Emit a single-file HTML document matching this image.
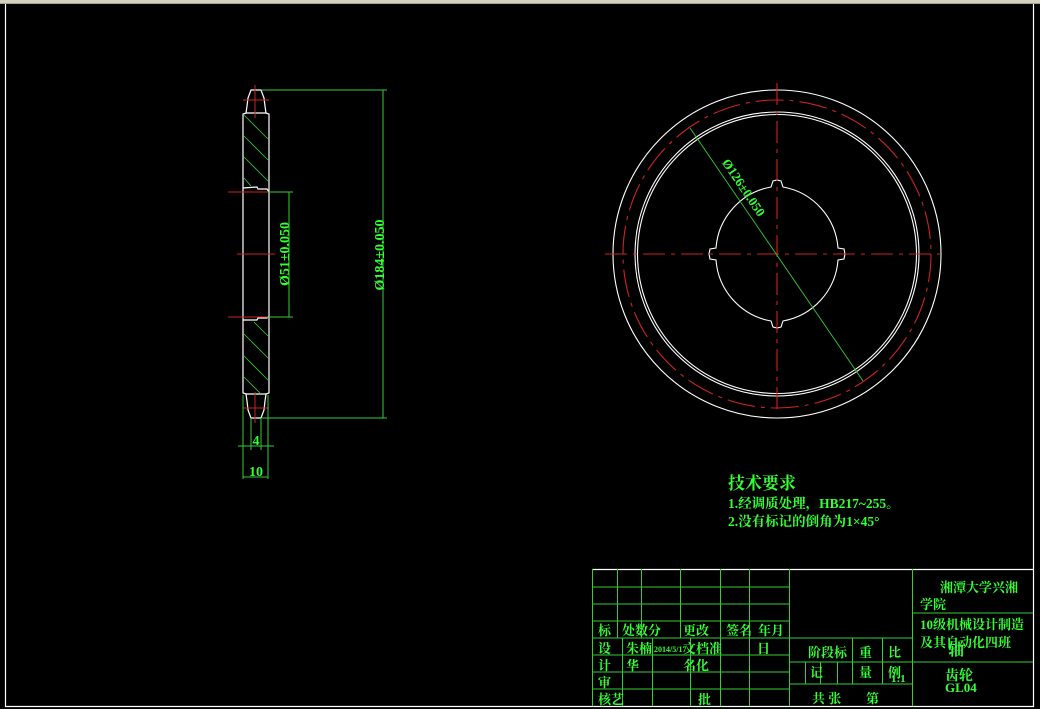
<!DOCTYPE html>
<html><head><meta charset="utf-8"><style>
html,body{margin:0;padding:0;background:#000;width:1040px;height:709px;overflow:hidden}
svg{display:block}
text{font-family:"Liberation Serif","Noto Serif CJK SC","WenQuanYi Zen Hei",serif;fill:#3f3;font-weight:bold}
</style></head><body>
<svg width="1040" height="709" viewBox="0 0 1040 709" xmlns="http://www.w3.org/2000/svg">
<rect x="0" y="0" width="1040" height="4" fill="#d4d0c0"/>
<line x1="0" y1="3.5" x2="1040" y2="3.5" stroke="#a8a490"/>
<g stroke="#fff" stroke-width="1.2" fill="none">
<line x1="5.5" y1="4" x2="5.5" y2="706.5"/>
<line x1="5" y1="706.5" x2="1034" y2="706.5"/>
<line x1="1033.5" y1="4" x2="1033.5" y2="707"/>
<line x1="592" y1="569.5" x2="1034" y2="569.5"/>
</g>
<g stroke="#fff" stroke-width="1.2" fill="none">
<path d="M251,90 L261,90 L264,98 L265,106 L266,113 L269,114 L269,393 L266,394 L265,401 L264,410 L261,418 L251,418 L248,410 L247,401 L246,394 L243,393 L243,114 L246,113 L247,106 L248,98 Z"/>
<line x1="246" y1="113" x2="266" y2="113"/>
<line x1="246" y1="394" x2="266" y2="394"/>
<path d="M243,188 L257,187 L258,189 L267,189 L269,192"/>
<path d="M243,320 L257,320 L258,318 L267,318 L269,316"/>
</g>
<g stroke="#3c3" stroke-width="0.8">
<line x1="244" y1="115" x2="268" y2="139"/><line x1="244" y1="136" x2="268" y2="160"/>
<line x1="244" y1="157" x2="268" y2="181"/><line x1="244" y1="178" x2="251" y2="186"/>
<line x1="254" y1="322" x2="268" y2="336"/><line x1="244" y1="334" x2="268" y2="358"/>
<line x1="244" y1="356" x2="268" y2="380"/><line x1="244" y1="377" x2="260" y2="393"/>
</g>
<g stroke="#c22" stroke-width="1">
<line x1="243" y1="100" x2="269" y2="100"/><line x1="255" y1="85" x2="255" y2="118"/>
<line x1="228" y1="192" x2="268" y2="192"/><line x1="237" y1="254" x2="275" y2="254"/>
<line x1="228" y1="317" x2="268" y2="317"/>
<line x1="243" y1="408" x2="269" y2="408"/><line x1="255" y1="392" x2="255" y2="423"/>
</g>
<g stroke="#3c3" stroke-width="1">
<line x1="262" y1="90" x2="387" y2="90"/><line x1="262" y1="418" x2="387" y2="418"/>
<line x1="383" y1="90" x2="383" y2="418"/>
<line x1="268" y1="192" x2="293" y2="192"/><line x1="268" y1="317" x2="293" y2="317"/>
<line x1="289" y1="192" x2="289" y2="317"/>
<line x1="243" y1="395" x2="243" y2="479"/><line x1="268" y1="395" x2="268" y2="479"/>
<line x1="251" y1="418" x2="251" y2="450"/><line x1="261" y1="418" x2="261" y2="450"/>
<line x1="238" y1="446" x2="274" y2="446"/>
<line x1="243" y1="477" x2="268" y2="477"/>
</g>
<text transform="translate(384,255) rotate(-90)" text-anchor="middle" font-size="14">Ø184±0.050</text>
<text transform="translate(289,254) rotate(-90)" text-anchor="middle" font-size="14">Ø51±0.050</text>
<text x="256" y="445" text-anchor="middle" font-size="14">4</text>
<text x="256" y="476" text-anchor="middle" font-size="14">10</text>
<g fill="none" stroke-width="1.1">
<circle cx="777" cy="254" r="164" stroke="#fff"/>
<circle cx="777" cy="254" r="154" stroke="#c22" stroke-dasharray="28,6,4,6"/>
<circle cx="777" cy="254" r="142" stroke="#fff"/>
<circle cx="777" cy="254" r="139.5" stroke="#fff"/>
<path stroke="#fff" d="M771,187 A67,67 0 0 0 716,248 L710,249 L709,254 L710,259 L716,260 A67,67 0 0 0 771,321 L773,327 L777,328 L781,327 L783,321 A67,67 0 0 0 838,260 L844,259 L845,254 L844,249 L838,248 A67,67 0 0 0 783,187 L781,181 L777,180 L773,181 Z"/>
<line x1="605" y1="254" x2="940" y2="254" stroke="#c22" stroke-dasharray="22,6,4,6"/>
<line x1="777" y1="83" x2="777" y2="415" stroke="#c22" stroke-dasharray="22,6,4,6"/>
<line x1="690" y1="128" x2="863" y2="381" stroke="#3c3" stroke-width="0.9"/>
</g>
<text transform="translate(740,190) rotate(56)" font-size="13" text-anchor="middle">Ø126±0.050</text>
<text x="728" y="489" font-size="17">技术要求</text>
<text x="728" y="508" font-size="13.5">1.经调质处理，HB217~255。</text>
<text x="728" y="526" font-size="13.5">2.没有标记的倒角为1×45°</text>
<g stroke="#3c3" stroke-width="1" fill="none">
<line x1="592.5" y1="569" x2="592.5" y2="706"/>
<line x1="789.5" y1="569" x2="789.5" y2="706"/>
<line x1="912.5" y1="569" x2="912.5" y2="706"/>
<line x1="592" y1="587" x2="789" y2="587"/>
<line x1="592" y1="604" x2="789" y2="604"/>
<line x1="592" y1="621" x2="789" y2="621"/>
<line x1="592" y1="638" x2="912" y2="638"/>
<line x1="592" y1="655" x2="789" y2="655"/>
<line x1="592" y1="672" x2="789" y2="672"/>
<line x1="592" y1="689" x2="789" y2="689"/>
<line x1="789" y1="662" x2="1033" y2="662"/>
<line x1="789" y1="684" x2="912" y2="684"/>
<line x1="912" y1="613" x2="1033" y2="613"/>
<line x1="617.5" y1="569" x2="617.5" y2="638"/>
<line x1="641.5" y1="569" x2="641.5" y2="638"/>
<line x1="680.5" y1="569" x2="680.5" y2="638"/>
<line x1="622.5" y1="638" x2="622.5" y2="706"/>
<line x1="652.5" y1="638" x2="652.5" y2="706"/>
<line x1="690.5" y1="638" x2="690.5" y2="706"/>
<line x1="720.5" y1="569" x2="720.5" y2="706"/>
<line x1="749.5" y1="569" x2="749.5" y2="706"/>
<line x1="852.5" y1="638" x2="852.5" y2="684"/>
<line x1="882.5" y1="638" x2="882.5" y2="684"/>
<line x1="805.5" y1="662" x2="805.5" y2="684"/>
<line x1="820.5" y1="662" x2="820.5" y2="684"/>
<line x1="837.5" y1="662" x2="837.5" y2="684"/>
</g>
<g font-size="13">
<text x="598" y="635">标</text><text x="622" y="635">处数分</text><text x="683" y="635">更改</text><text x="726" y="635">签名</text><text x="758" y="635">年月</text>
<text x="598" y="653">设</text><text x="626" y="653">朱楠</text><text x="654" y="652" font-size="8">2014/5/17</text><text x="683" y="653">文档准</text><text x="757" y="653">日</text>
<text x="598" y="670">计</text><text x="626" y="670">华</text><text x="683" y="670">名化</text>
<text x="598" y="687">审</text>
<text x="598" y="704">核艺</text><text x="698" y="704">批</text>
<text x="808" y="657">阶段标</text><text x="859" y="657">重</text><text x="888" y="657">比</text>
<text x="810" y="677">记</text><text x="859" y="677">量</text><text x="888" y="677">例</text>
<text x="891" y="682" font-size="11" font-weight="normal">1:1</text>
<text x="812" y="703">共 张</text><text x="866" y="703">第</text>
<text x="940" y="592">湘潭大学兴湘</text>
<text x="920" y="609">学院</text>
<text x="920" y="629">10级机械设计制造</text>
<text x="920" y="647">及其自动化四班</text>
<text x="948" y="655" font-size="16">轴</text>
<text x="945" y="680" font-size="14">齿轮</text>
<text x="945" y="692" font-size="13">GL04</text>
</g>
</svg>
</body></html>
